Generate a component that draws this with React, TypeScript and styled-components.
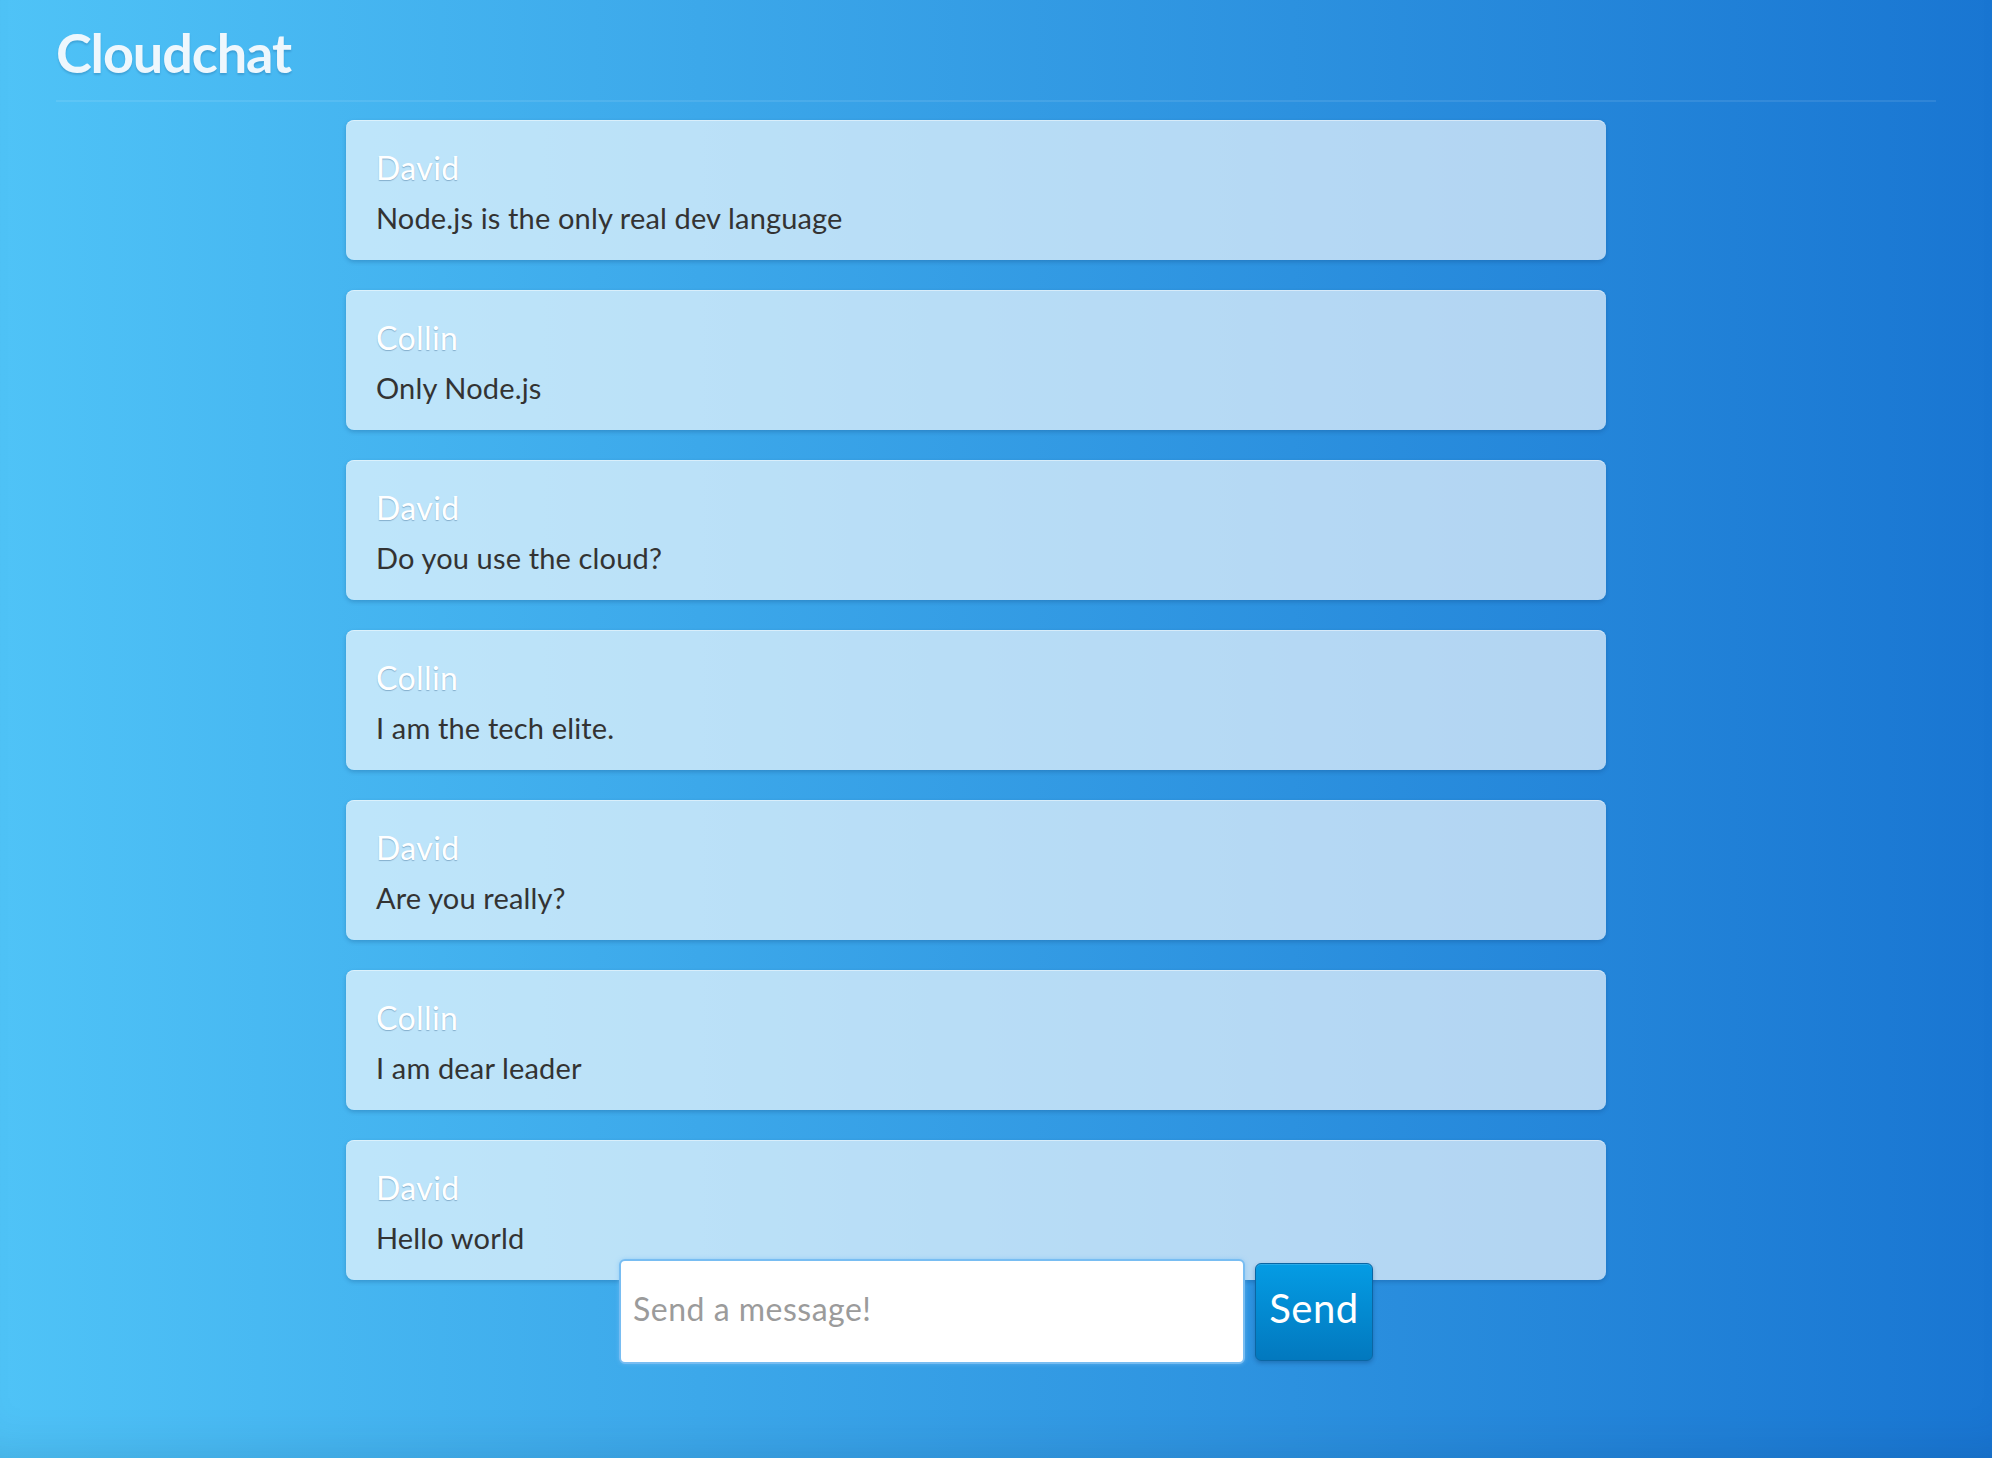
import React from "react";
import styled, { createGlobalStyle } from "styled-components";

const GlobalStyle = createGlobalStyle`
  html, body {
    margin: 0;
    padding: 0;
  }
  body {
    font-family: Lato, "Open Sans", "Noto Sans", sans-serif;
  }
  * { box-sizing: border-box; }
`;

const Page = styled.div`
  min-height: 1458px;
  padding: 0 56px;
  background: linear-gradient(to right, #4fc3f7 0%, #1976d2 100%);
  box-shadow: inset 0 -40px 50px -40px rgba(0, 40, 90, 0.18);
`;

const Header = styled.header`
  padding: 20px 0 15px 0;
  border-bottom: 2px solid rgba(255, 255, 255, 0.09);
`;

const Title = styled.h1`
  margin: 0;
  font-family: Lato, sans-serif;
  font-weight: 700;
  font-size: 54px;
  line-height: 65px;
  letter-spacing: -1.1px;
  color: #eef7fd;
  text-shadow: 0 2px 2px rgba(0, 40, 90, 0.18);
`;

const MessageList = styled.main`
  width: 1260px;
  margin-left: 290px;
  padding-top: 18px;
  display: flex;
  flex-direction: column;
  gap: 30px;
`;

const Card = styled.article`
  height: 140px;
  padding: 28px 30px 24px 30px;
  border-radius: 8px;
  background: rgba(255, 255, 255, 0.65);
  box-shadow: 0 2px 4px rgba(0, 40, 90, 0.22), inset 0 1px 0 rgba(255, 255, 255, 0.45);
`;

const Author = styled.div`
  font-size: 32px;
  line-height: 40px;
  letter-spacing: 0.4px;
  color: #ffffff;
  text-shadow: 0 1px 1px rgba(0, 50, 100, 0.3);
`;

const Body = styled.div`
  margin-top: 12px;
  font-size: 29px;
  line-height: 36px;
  letter-spacing: 0.15px;
  color: #333333;
`;

const Composer = styled.form`
  display: flex;
  justify-content: center;
  align-items: center;
  gap: 10px;
  margin-top: -21px;
  position: relative;
`;

const Input = styled.input`
  width: 626px;
  height: 105px;
  padding: 0 12px 6px 12px;
  border: 2px solid #78bdf2;
  border-radius: 6px;
  background: #ffffff;
  font-family: Lato, sans-serif;
  font-size: 32px;
  letter-spacing: 0.5px;
  color: #333;
  outline: none;
  box-shadow: 0 0 4px rgba(120, 190, 245, 0.6);
  &::placeholder {
    color: #9b9b9b;
  }
`;

const SendButton = styled.button`
  width: 118px;
  height: 98px;
  padding: 0 0 7px 0;
  border: 1px solid #0b66a3;
  border-radius: 6px;
  background: linear-gradient(to bottom, #049ce4 0%, #0278be 100%);
  color: #ffffff;
  font-family: Lato, sans-serif;
  font-size: 40px;
  letter-spacing: 0.5px;
  box-shadow: 0 2px 4px rgba(0, 40, 90, 0.3), inset 0 1px 0 rgba(255, 255, 255, 0.15);
  cursor: pointer;
`;

const messages = [
  { author: "David", text: "Node.js is the only real dev language" },
  { author: "Collin", text: "Only Node.js" },
  { author: "David", text: "Do you use the cloud?" },
  { author: "Collin", text: "I am the tech elite." },
  { author: "David", text: "Are you really?" },
  { author: "Collin", text: "I am dear leader" },
  { author: "David", text: "Hello world" },
];

export default function App() {
  return (
    <>
      <GlobalStyle />
      <Page>
        <Header>
          <Title>Cloudchat</Title>
        </Header>
        <MessageList>
          {messages.map((m, i) => (
            <Card key={i}>
              <Author>{m.author}</Author>
              <Body>{m.text}</Body>
            </Card>
          ))}
        </MessageList>
        <Composer onSubmit={(e) => e.preventDefault()}>
          <Input placeholder="Send a message!" />
          <SendButton type="submit">Send</SendButton>
        </Composer>
      </Page>
    </>
  );
}
